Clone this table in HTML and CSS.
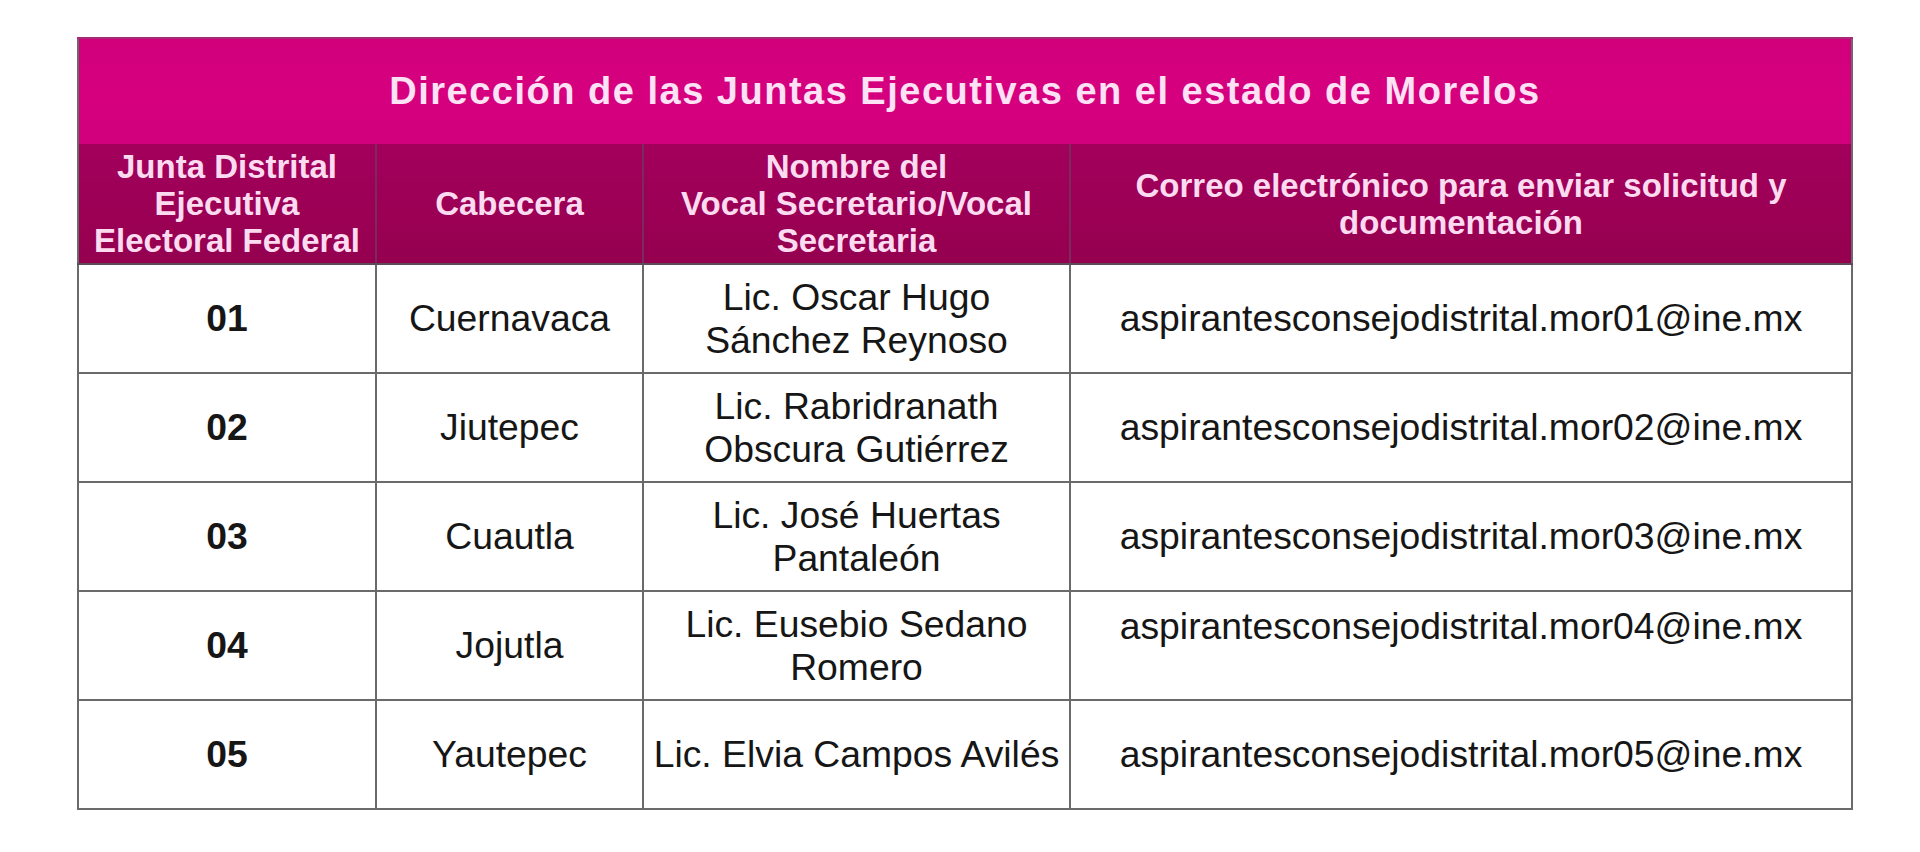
FILE: index.html
```html
<!DOCTYPE html>
<html lang="es">
<head>
<meta charset="utf-8">
<title>Dirección de las Juntas Ejecutivas en el estado de Morelos</title>
<link rel="stylesheet" href="styles.css">
</head>
<body>
<main class="page">
  <table class="juntas">
    <colgroup>
      <col class="c1">
      <col class="c2">
      <col class="c3">
      <col class="c4">
    </colgroup>
    <thead>
      <tr class="title-row">
        <th colspan="4" class="title">Dirección de las Juntas Ejecutivas en el estado de Morelos</th>
      </tr>
      <tr class="head-row">
        <th>Junta Distrital<br>Ejecutiva<br>Electoral Federal</th>
        <th>Cabecera</th>
        <th>Nombre del<br>Vocal Secretario/Vocal<br>Secretaria</th>
        <th>Correo electrónico para enviar solicitud y documentación</th>
      </tr>
    </thead>
    <tbody>
      <tr>
        <td class="num">01</td>
        <td>Cuernavaca</td>
        <td>Lic. Oscar Hugo<br>Sánchez Reynoso</td>
        <td>aspirantesconsejodistrital.mor01@ine.mx</td>
      </tr>
      <tr>
        <td class="num">02</td>
        <td>Jiutepec</td>
        <td>Lic. Rabridranath<br>Obscura Gutiérrez</td>
        <td>aspirantesconsejodistrital.mor02@ine.mx</td>
      </tr>
      <tr>
        <td class="num">03</td>
        <td>Cuautla</td>
        <td>Lic. José Huertas<br>Pantaleón</td>
        <td>aspirantesconsejodistrital.mor03@ine.mx</td>
      </tr>
      <tr>
        <td class="num">04</td>
        <td>Jojutla</td>
        <td>Lic. Eusebio Sedano<br>Romero</td>
        <td class="top">aspirantesconsejodistrital.mor04@ine.mx</td>
      </tr>
      <tr>
        <td class="num">05</td>
        <td>Yautepec</td>
        <td class="nowrap">Lic. Elvia Campos Avilés</td>
        <td>aspirantesconsejodistrital.mor05@ine.mx</td>
      </tr>
    </tbody>
  </table>
</main>
</body>
</html>
```
FILE: styles.css
```css
html, body {
  margin: 0;
  padding: 0;
  background: #ffffff;
}

.page {
  padding: 37px 0 0 77px;
  font-family: "Liberation Sans", Arial, sans-serif;
}

.juntas {
  border-collapse: collapse;
  table-layout: fixed;
  width: 1774px;
  border: 2px solid #6a6a6a;
}

.c1 { width: 298px; }
.c2 { width: 267px; }
.c3 { width: 427px; }
.c4 { width: 782px; }

.title-row {
  height: 106px;
}

.title {
  background: linear-gradient(#d1007b, #d6007f 50%, #d2007c);
  border-top: 2px solid #a52a78;
  color: #fde1f4;
  font-weight: bold;
  font-size: 38px;
  letter-spacing: 1.5px;
  text-align: center;
  padding: 0;
  vertical-align: middle;
}

.head-row {
  height: 120px;
}

.head-row th {
  background: linear-gradient(#a3005c, #95004f);
  color: #fcdaf0;
  font-weight: bold;
  font-size: 33px;
  letter-spacing: 0;
  line-height: 37px;
  text-align: center;
  vertical-align: middle;
  padding: 0 12px;
  border-left: 2px solid #7a2a5c;
  border-bottom: 2px solid #5e4a58;
}

.head-row th:first-child {
  border-left: none;
  padding: 0 2px;
}

tbody tr {
  height: 109px;
}

tbody td {
  border: 2px solid #6a6a6a;
  color: #161616;
  font-size: 37.3px;
  line-height: 43px;
  text-align: center;
  vertical-align: middle;
  padding: 0 4px;
}

tbody td.num {
  font-weight: bold;
}

tbody td.top {
  vertical-align: top;
  padding-top: 13px;
}

tbody td.nowrap {
  white-space: nowrap;
  padding: 0;
}
```
